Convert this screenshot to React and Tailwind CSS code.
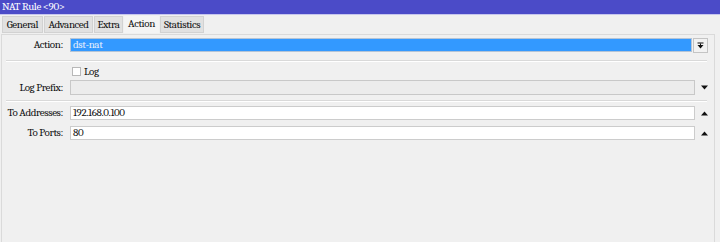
import React from 'react'

const tabs = [
  { name: 'General', w: 'w-[41px]' },
  { name: 'Advanced', w: 'w-[49px]' },
  { name: 'Extra', w: 'w-[29px]' },
  { name: 'Action', w: 'w-[35px]', active: true },
  { name: 'Statistics', w: 'w-[44px]' },
]

function TriDown() {
  return (
    <svg width="7" height="5" viewBox="0 0 7 5">
      <path d="M0 0.5 L7 0.5 L3.5 4.5 Z" fill="#111" />
    </svg>
  )
}

function TriUp() {
  return (
    <svg width="7" height="5" viewBox="0 0 7 5">
      <path d="M0 4.5 L7 4.5 L3.5 0.5 Z" fill="#111" />
    </svg>
  )
}

function Label({ children }) {
  return <div className="w-[62px] shrink-0 text-right pr-[1px] leading-[14px]">{children}</div>
}

function Separator() {
  return <div className="ml-[4px] mr-[7px] h-[2px] border-t border-[#d9d9d9] border-b border-b-white" />
}

export default function App() {
  return (
    <div className="w-[720px] h-[242px] bg-[#f0f0f0] flex flex-col overflow-hidden text-[11px] tracking-[-0.4px] text-[#111] font-serif">
      <div className="h-[15px] shrink-0 bg-[#4b4bc8] border-b border-[#c6c6ee] text-white leading-[14px] pl-[2px]">
        NAT Rule &lt;90&gt;
      </div>

      <div className="h-[19px] shrink-0 flex items-end gap-[1px] pl-[2px] pb-[1px]">
        {tabs.map(t => (
          <div
            key={t.name}
            className={`${t.w} h-[17px] text-center leading-[16px] ${
              t.active ? 'bg-[#f4f4f4]' : 'bg-[#e1e1e1] border border-[#d2d2d2]'
            }`}
          >
            {t.name}
          </div>
        ))}
      </div>

      <div className="flex-1 ml-[1px] mr-[5px] border-l border-r border-t border-[#dadada] flex flex-col">
        <div className="mt-[3px] h-[14px] flex items-center">
          <Label>Action:</Label>
          <div className="ml-[6px] flex-1 h-[14px] bg-[#3399ff] border border-[#b4c4d6] text-[#e6eefc] leading-[12px] pl-[2px]">
            dst-nat
          </div>
          <div className="ml-[1px] mr-[6px] w-[15px] h-[15px] border border-[#c4c4c4] bg-[#f2f2f2] flex items-center justify-center">
            <svg width="7" height="7" viewBox="0 0 7 7">
              <rect x="0.5" y="0.5" width="6" height="1" fill="#111" />
              <rect x="3" y="1.5" width="1" height="2" fill="#111" />
              <path d="M0.5 3 L6.5 3 L3.5 6.5 Z" fill="#111" />
            </svg>
          </div>
        </div>

        <div className="mt-[8px]">
          <Separator />
        </div>

        <div className="mt-[4px] h-[11px] flex items-center">
          <div className="w-[62px] shrink-0" />
          <div className="ml-[8px] w-[9px] h-[9px] border border-[#b8b8b8] bg-white" />
          <div className="ml-[3px] leading-[11px]">Log</div>
        </div>

        <div className="mt-[3px] h-[15px] flex items-center">
          <Label>Log Prefix:</Label>
          <div className="ml-[6px] flex-1 h-[15px] bg-[#ececec] border border-[#c8c8c8]" />
          <div className="w-[19px] shrink-0 flex justify-center">
            <TriDown />
          </div>
        </div>

        <div className="mt-[5px]">
          <Separator />
        </div>

        <div className="mt-[4px] h-[14px] flex items-center">
          <Label>To Addresses:</Label>
          <div className="ml-[6px] flex-1 h-[14px] bg-white border border-[#cccccc] leading-[12px] pl-[2px]">
            192.168.0.100
          </div>
          <div className="w-[19px] shrink-0 flex justify-center">
            <TriUp />
          </div>
        </div>

        <div className="mt-[6px] h-[14px] flex items-center">
          <Label>To Ports:</Label>
          <div className="ml-[6px] flex-1 h-[14px] bg-white border border-[#cccccc] leading-[12px] pl-[2px]">
            80
          </div>
          <div className="w-[19px] shrink-0 flex justify-center">
            <TriUp />
          </div>
        </div>
      </div>
    </div>
  )
}
